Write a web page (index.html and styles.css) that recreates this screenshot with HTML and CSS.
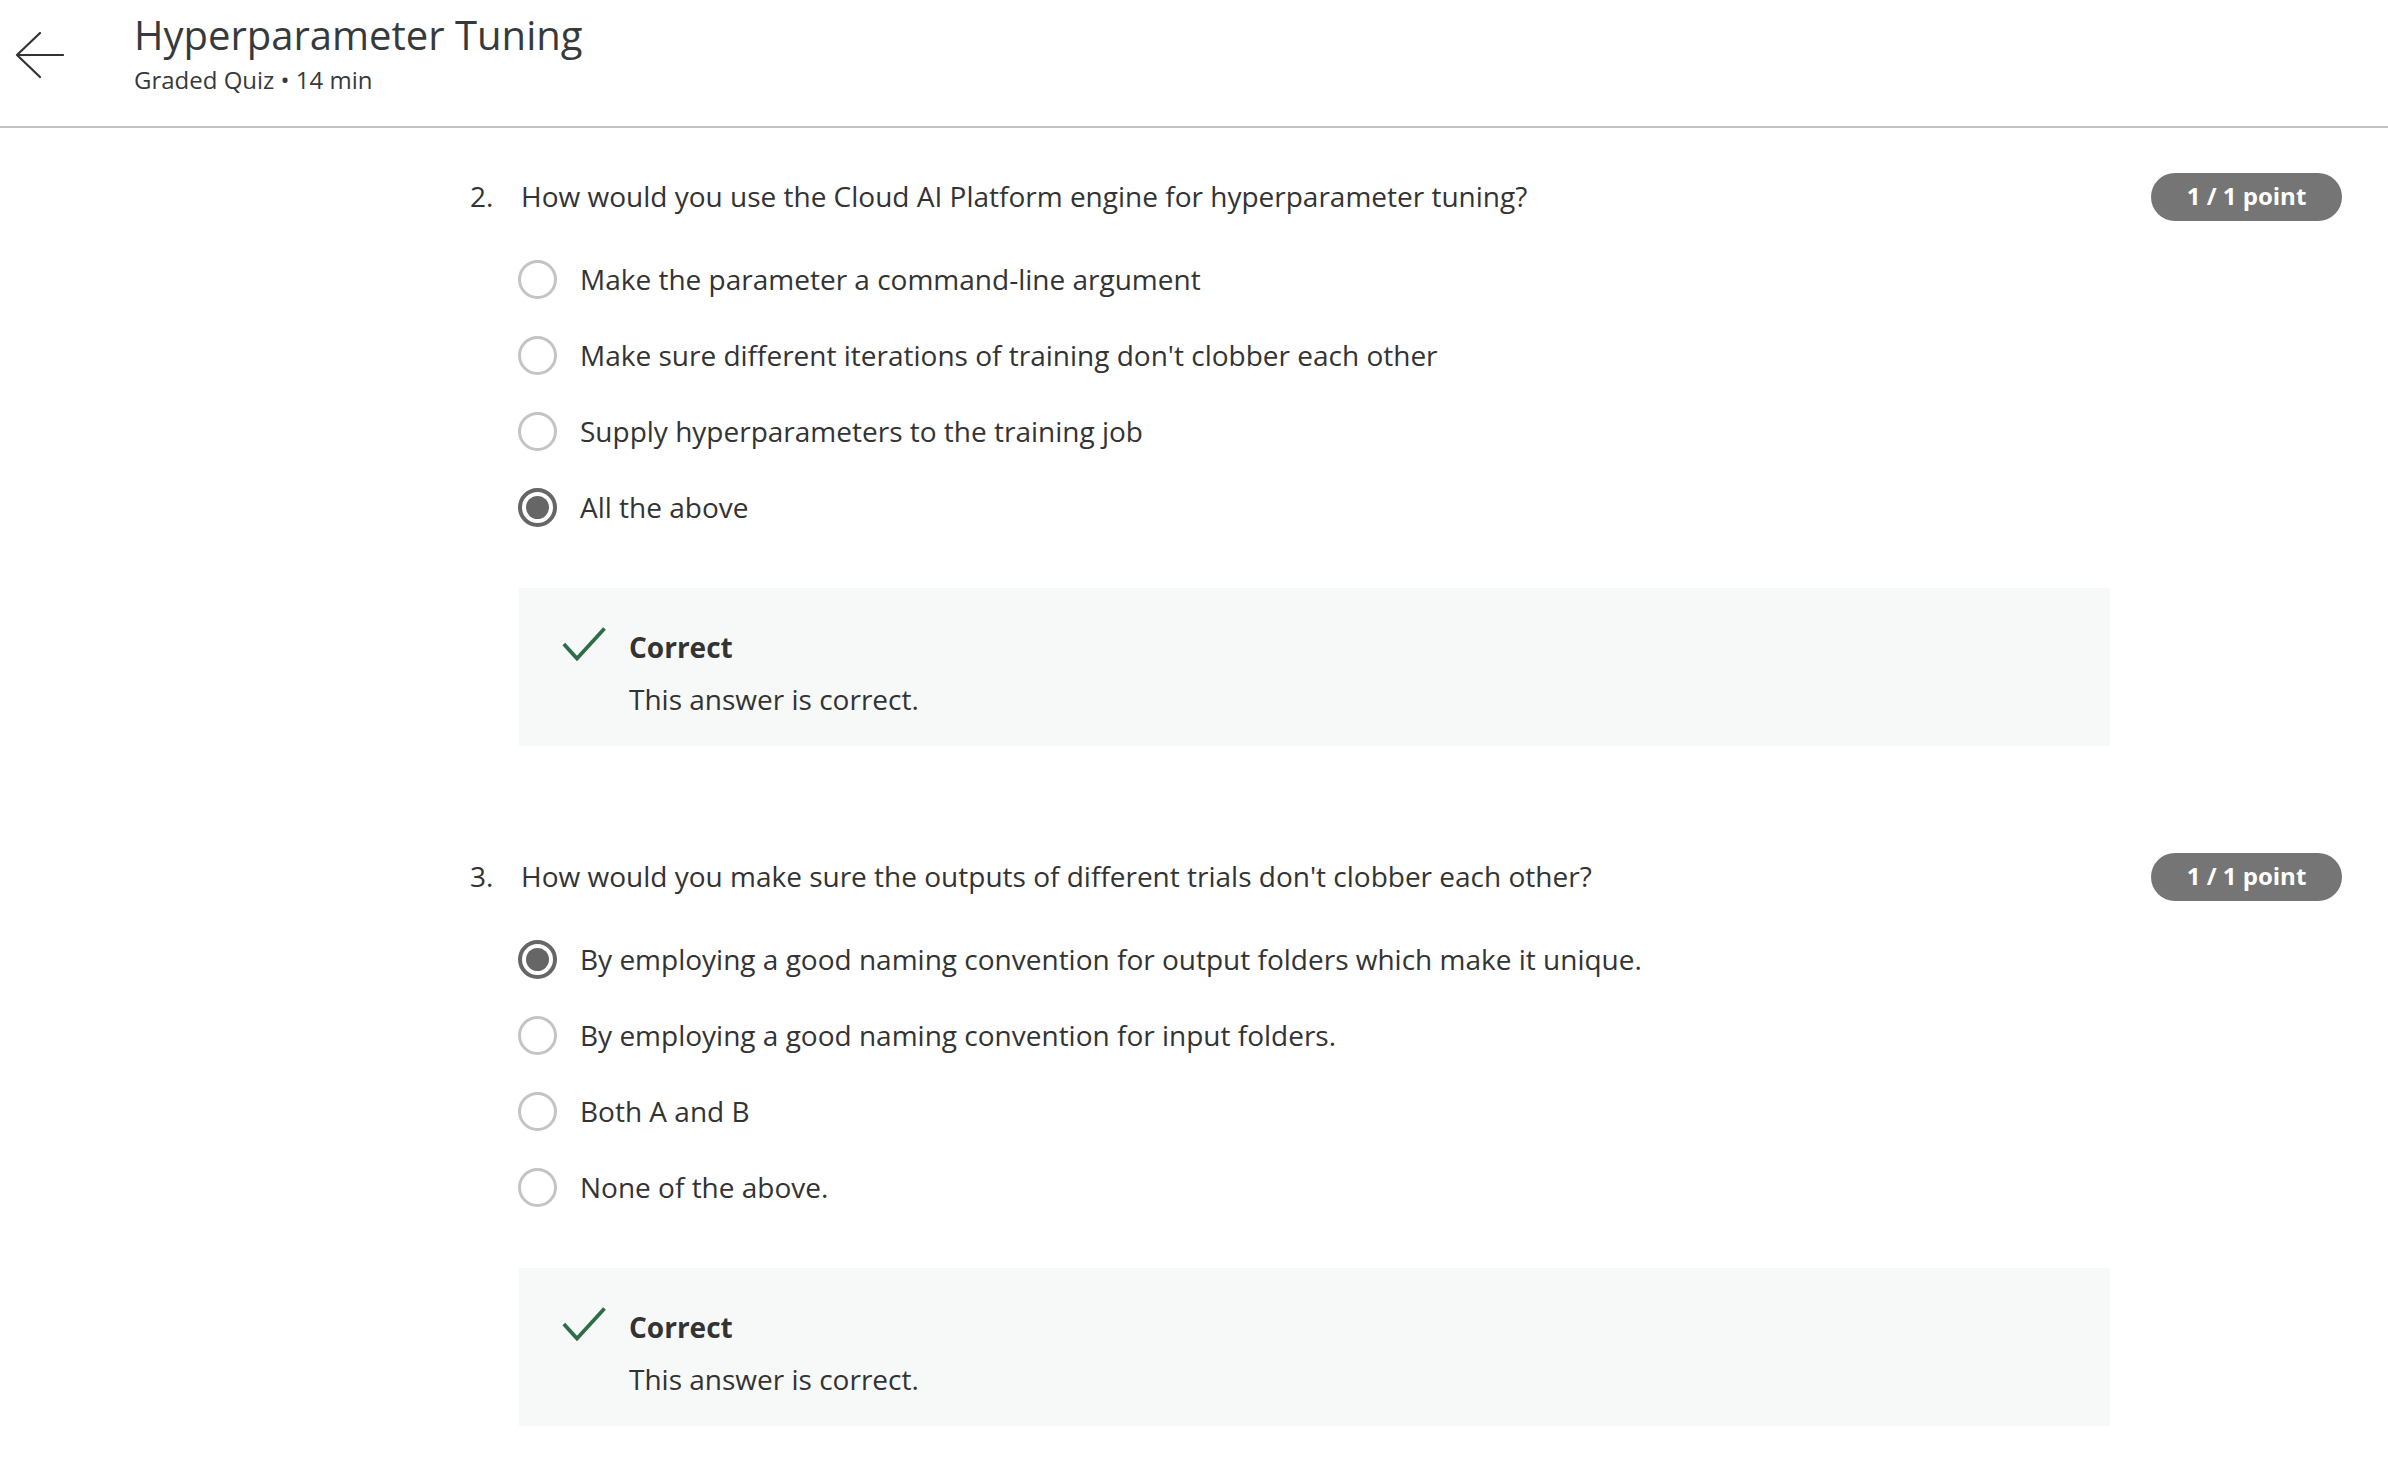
FILE: index.html
```html
<!DOCTYPE html>
<html lang="en">
<head>
<meta charset="utf-8">
<title>Hyperparameter Tuning</title>
<link rel="stylesheet" href="styles.css">
</head>
<body>
<header class="topbar">
  <a class="back" href="#" aria-label="Back">
    <svg width="64" height="80" viewBox="0 0 64 80"><path d="M40 33 L17 55 L40 77 M17 55 L63 55" fill="none" stroke="#333" stroke-width="2.2" stroke-linecap="round" stroke-linejoin="round"/></svg>
  </a>
  <div class="titles">
    <h1 class="title">Hyperparameter Tuning</h1>
    <div class="subtitle">Graded Quiz • 14 min</div>
  </div>
</header>
<main class="quiz">
  <section class="question">
    <div class="qrow">
      <span class="qnum">2.</span>
      <span class="qtext">How would you use the Cloud AI Platform engine for hyperparameter tuning?</span>
      <span class="badge">1 / 1 point</span>
    </div>
    <ul class="options">
      <li class="option"><span class="radio"></span><span class="otext">Make the parameter a command-line argument</span></li>
      <li class="option"><span class="radio"></span><span class="otext">Make sure different iterations of training don't clobber each other</span></li>
      <li class="option"><span class="radio"></span><span class="otext">Supply hyperparameters to the training job</span></li>
      <li class="option"><span class="radio checked"></span><span class="otext">All the above</span></li>
    </ul>
    <div class="feedback">
      <svg class="check" width="44" height="34" viewBox="0 0 44 34"><path d="M1.8 17 L15 31.5 L42.5 1.5" fill="none" stroke="#2d6e48" stroke-width="3.8"/></svg>
      <div class="ftext">
        <div class="fhead">Correct</div>
        <div class="fbody">This answer is correct.</div>
      </div>
    </div>
  </section>
  <section class="question">
    <div class="qrow">
      <span class="qnum">3.</span>
      <span class="qtext">How would you make sure the outputs of different trials don't clobber each other?</span>
      <span class="badge">1 / 1 point</span>
    </div>
    <ul class="options">
      <li class="option"><span class="radio checked"></span><span class="otext">By employing a good naming convention for output folders which make it unique.</span></li>
      <li class="option"><span class="radio"></span><span class="otext">By employing a good naming convention for input folders.</span></li>
      <li class="option"><span class="radio"></span><span class="otext">Both A and B</span></li>
      <li class="option"><span class="radio"></span><span class="otext">None of the above.</span></li>
    </ul>
    <div class="feedback">
      <svg class="check" width="44" height="34" viewBox="0 0 44 34"><path d="M1.8 17 L15 31.5 L42.5 1.5" fill="none" stroke="#2d6e48" stroke-width="3.8"/></svg>
      <div class="ftext">
        <div class="fhead">Correct</div>
        <div class="fbody">This answer is correct.</div>
      </div>
    </div>
  </section>
</main>
</body>
</html>
```
FILE: styles.css
```css
* { box-sizing: border-box; }
html, body { margin: 0; padding: 0; background: #fff; }
body {
  font-family: "Open Sans", "Noto Sans", sans-serif;
  color: #333;
  width: 2388px;
  height: 1468px;
  overflow: hidden;
}
.topbar {
  display: flex;
  align-items: flex-start;
  height: 128px;
  border-bottom: 2px solid #c2c2c2;
}
.back {
  display: block;
  width: 64px;
  height: 80px;
}
.back svg { display: block; }
.titles {
  margin-left: 70px;
  padding-top: 8px;
}
.title {
  margin: 0;
  font-size: 40px;
  font-weight: 400;
  line-height: 54px;
  color: #373a3c;
}
.subtitle {
  font-size: 24px;
  line-height: 32px;
  color: #373a3c;
  margin-top: 2px;
}
.quiz {
  padding: 48px 46px 0 470px;
}
.question + .question { margin-top: 110px; }
.qrow {
  display: flex;
  align-items: center;
  height: 40px;
}
.qnum {
  width: 51px;
  font-size: 28px;
  line-height: 40px;
}
.qtext {
  flex: 1;
  font-size: 28px;
  line-height: 40px;
}
.badge {
  width: 191px;
  height: 48px;
  border-radius: 24px;
  background: #757575;
  color: #fff;
  font-weight: 700;
  font-size: 24px;
  line-height: 46px;
  text-align: center;
  margin-top: 2px;
}
.options {
  list-style: none;
  margin: 25px 0 0 48px;
  padding: 0;
}
.option {
  display: flex;
  align-items: center;
  height: 76px;
}
.radio {
  width: 39px;
  height: 39px;
  border-radius: 50%;
  border: 3px solid #c4c4c4;
  flex: none;
  position: relative;
}
.radio.checked {
  border: 4px solid #666;
}
.radio.checked::after {
  content: "";
  position: absolute;
  left: 4px;
  top: 4px;
  width: 23px;
  height: 23px;
  border-radius: 50%;
  background: #666;
}
.otext {
  margin-left: 23px;
  font-size: 28px;
  line-height: 40px;
}
.feedback {
  margin: 43px 0 0 49px;
  width: 1591px;
  height: 158px;
  background: #f7f9f8;
  display: flex;
  align-items: flex-start;
  padding: 39px 0 0 43px;
}
.check { display: block; flex: none; }
.ftext { margin-left: 23px; }
.fhead {
  font-weight: 700;
  font-size: 28px;
  line-height: 40px;
}
.fbody {
  font-size: 28px;
  line-height: 40px;
  margin-top: 12px;
}
```
